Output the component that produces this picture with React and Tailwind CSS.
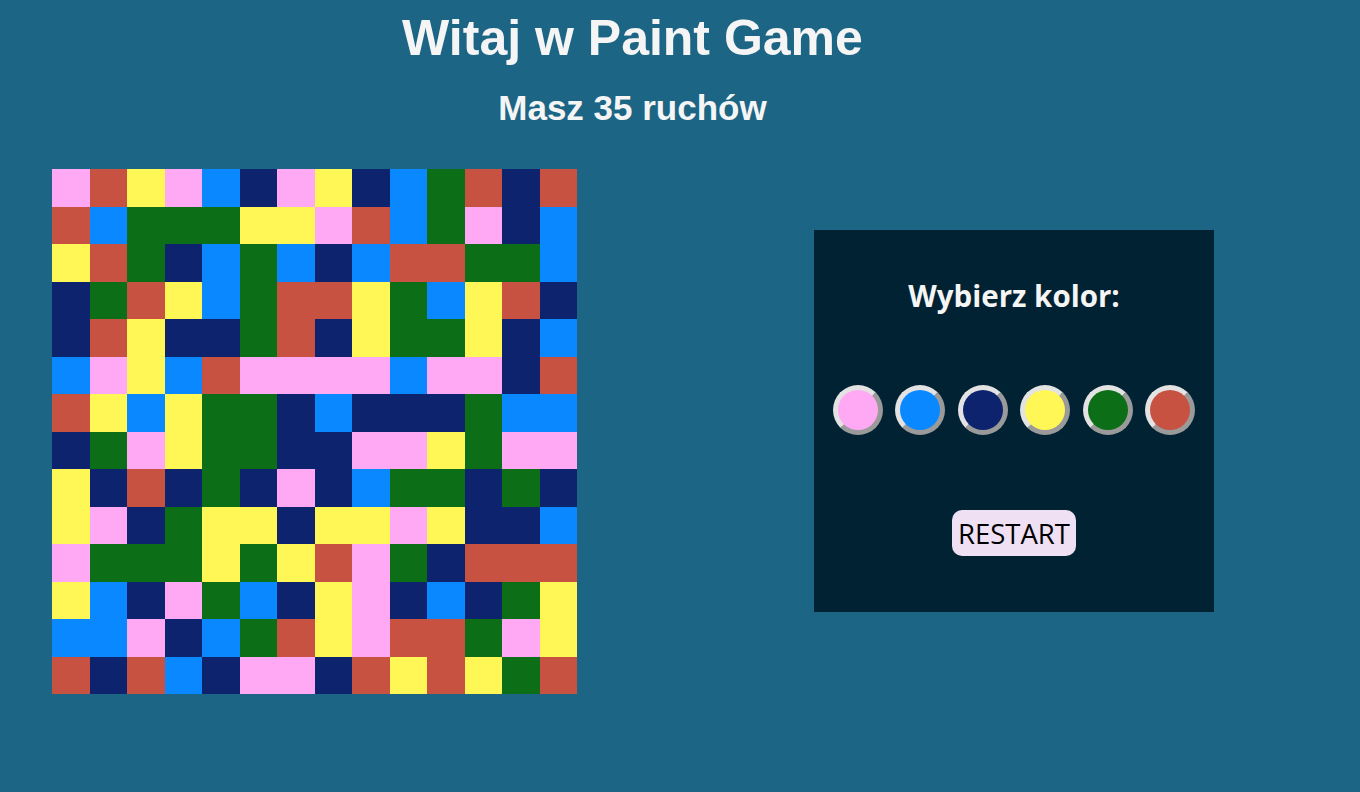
import React from "react";

// Board colours, one letter per cell
const palette = {
    P: "bg-[#ffa9f4]",
    B: "bg-[#0a88ff]",
    N: "bg-[#0d236d]",
    Y: "bg-[#fff755]",
    G: "bg-[#0c6e17]",
    R: "bg-[#c85242]",
};

const board = [
    "PRYPBNPYNBGRNR",
    "RBGGGYYPRBGPNB",
    "YRGNBGBNBRRGGB",
    "NGRYBGRRYGBYRN",
    "NRYNNGRNYGGYNB",
    "BPYBRPPPPBPPNR",
    "RYBYGGNBNNNGBB",
    "NGPYGGNNPPYGPP",
    "YNRNGNPNBGGNGN",
    "YPNGYYNYYPYNNB",
    "PGGGYGYRPGNRRR",
    "YBNPGBNYPNBNGY",
    "BBPNBGRYPRRGPY",
    "RNRBNPPNRYRYGR",
];

const choices = ["P", "B", "N", "Y", "G", "R"];

const App = () => {
    return (
        <div className="min-h-screen w-full bg-[#1c6585] font-['Liberation_Sans',Arial,sans-serif] text-[#f5f5f5]">
            {/* Header */}
            <div className="w-[1265px] text-center">
                <h1 className="pt-[9px] text-[50px] font-bold leading-[58px]">
                    Witaj w Paint Game
                </h1>
                <h2 className="mt-[21px] text-[35px] font-bold leading-[40px]">
                    Masz 35 ruchów
                </h2>
            </div>

            <div className="flex items-start pl-[52px] pt-[41px]">
                {/* Board */}
                <div className="grid h-[525px] w-[525px] grid-cols-14 grid-rows-14">
                    {board.map((row, r) =>
                        row.split("").map((c, i) => (
                            <div key={r + "-" + i} className={palette[c]} />
                        ))
                    )}
                </div>

                {/* Colour picker */}
                <div className="ml-[237px] mt-[61px] flex h-[382px] w-[400px] flex-col items-center bg-[#012233]">
                    <h3 className="mt-[46px] font-['Open_Sans',sans-serif] text-[29.5px] font-bold leading-[40px]">
                        Wybierz kolor:
                    </h3>
                    <div className="mt-[69px] flex gap-[12.6px]">
                        {choices.map((c) => (
                            <button
                                key={c}
                                className={
                                    "h-[50px] w-[50px] rounded-full border-[5px] border-t-[#e3e3e3] border-l-[#e3e3e3] border-b-[#9a9a9a] border-r-[#9a9a9a] " +
                                    palette[c]
                                }
                            />
                        ))}
                    </div>
                    <button className="mt-[75px] h-[46px] w-[124px] rounded-[10px] bg-[#f0e0f4] pt-[1px] font-['Open_Sans',sans-serif] text-[27.5px] leading-none text-black">
                        RESTART
                    </button>
                </div>
            </div>
        </div>
    );
};

export default App;
